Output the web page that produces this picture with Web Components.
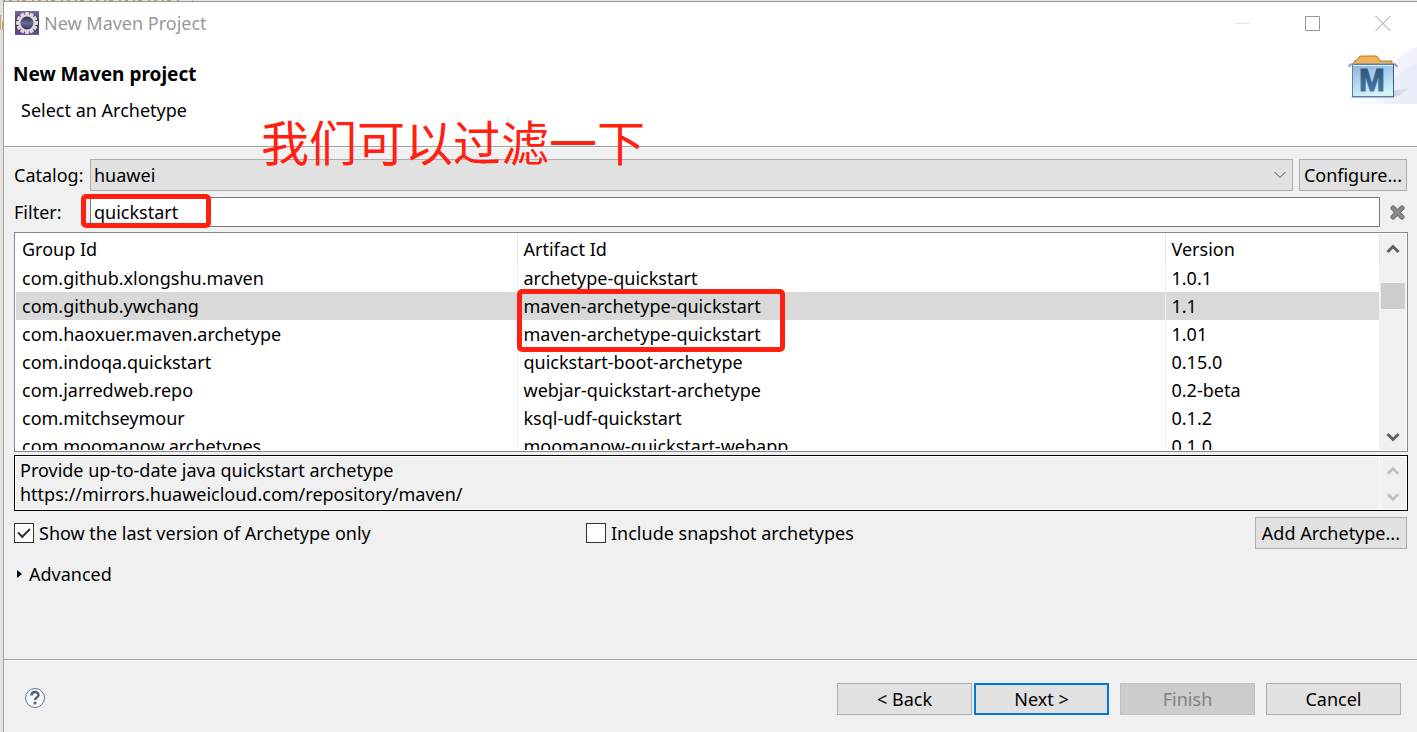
<!DOCTYPE html>
<html lang="zh">
<head>
<meta charset="utf-8">
<title>New Maven Project</title>
<style>
  html, body {
    height: 100%;
    margin: 0;
  }

  body {
    display: flex;
    flex-direction: column;
    position: relative;
    overflow: hidden;
    background: #e4e2df;
    color: #000;
    font: 18px/24px "Noto Sans", "Open Sans", "Noto Sans CJK SC", sans-serif;
  }

  wizard-dialog {
    flex: 1;
    margin: 1px 0 0 3px;
  }
</style>
</head>
<body>
<background-window></background-window>
<wizard-dialog>
  <window-titlebar slot="titlebar">New Maven Project</window-titlebar>
  <wizard-header slot="header" heading="New Maven project">
    Select an Archetype
    <red-note slot="note">我们可以过滤一下</red-note>
  </wizard-header>
  <archetype-filter></archetype-filter>
  <archetype-table></archetype-table>
  <archetype-description></archetype-description>
  <archetype-options></archetype-options>
  <wizard-footer slot="footer"></wizard-footer>
</wizard-dialog>

<script>
const BUTTON_CSS = `
  button {
    height: 32px;
    box-sizing: border-box;
    padding: 0 4px;
    border: 1px solid #adadad;
    border-radius: 0;
    background: #e1e1e1;
    color: #000;
    font: inherit;
    line-height: 24px;
    white-space: nowrap;
  }
`;

const SCROLLBAR_CSS = `
  .scrollbar {
    display: flex;
    flex-direction: column;
    flex: none;
    width: 26px;
    background: #f0f0f0;
    color: #606060;
  }

  .scrollbar svg {
    display: block;
    flex: none;
    width: 26px;
    height: 28px;
    fill: none;
    stroke: currentColor;
    stroke-width: 3;
  }
`;

const ARROW_UP = `<svg viewBox="0 0 26 28" aria-hidden="true"><path d="M7.5 18 13 12.500 18.500 18"/></svg>`;
const ARROW_DOWN = `<svg viewBox="0 0 26 28" aria-hidden="true"><path d="M7.5 12 13 17.500 18.500 12"/></svg>`;

// the edge of the project tree that shows from under the dialog
class BackgroundWindow extends HTMLElement {
  connectedCallback() {
    const shadow = this.attachShadow({ mode: "open" });
    shadow.innerHTML = `
      <style>
        :host {
          position: absolute;
          inset: 0;
        }

        svg {
          display: block;
        }
      </style>
      <svg width="200" height="40" aria-hidden="true">
        <path d="M3 .5h178" stroke="#b89a5a" stroke-dasharray="2 4 3 5 2 3 4 6"/>
        <path d="M192.500 0v2" stroke="#bbb"/>
        <path d="M.5 15v15M2.500 21v9" stroke="#c9a566"/>
      </svg>
    `;
  }
}

class WizardDialog extends HTMLElement {
  connectedCallback() {
    const shadow = this.attachShadow({ mode: "open" });
    shadow.innerHTML = `
      <style>
        :host {
          display: flex;
          flex-direction: column;
          position: relative;
          min-height: 0;
          border-top: 1px solid #999;
          border-left: 1px solid #a0a0a0;
          background: #f0f0f0;
        }

        main {
          flex: 1;
          display: flex;
          flex-direction: column;
          gap: 3px;
          padding: 12px 9px 0 10px;
        }
      </style>
      <slot name="titlebar"></slot>
      <slot name="header"></slot>
      <main><slot></slot></main>
      <slot name="footer"></slot>
    `;
  }
}

class WindowTitlebar extends HTMLElement {
  connectedCallback() {
    const shadow = this.attachShadow({ mode: "open" });
    let teeth = "";
    for (let i = 0; i < 12; i++) {
      teeth += `<rect x="10" y="1" width="4" height="5" rx="1" transform="rotate(${i * 30} 12 12)"/>`;
    }
    shadow.innerHTML = `
      <style>
        :host {
          display: flex;
          align-items: center;
          gap: 5px;
          height: 42px;
          padding-left: 11px;
          background: #fff;
          color: #999;
        }

        .title {
          flex: 1;
        }

        .controls {
          display: flex;
        }

        button {
          width: 70px;
          height: 42px;
          padding: 0 0 0 2px;
          border: 0;
          background: none;
          color: #999;
        }

        button:disabled {
          color: #e5e5e5;
        }

        svg {
          display: block;
          margin: auto 0;
        }

        button svg {
          margin: auto;
          fill: none;
          stroke: currentColor;
        }
      </style>
      <svg width="24" height="24" viewBox="0 0 24 24" aria-hidden="true">
        <defs>
          <linearGradient id="plate" x2="0" y2="1">
            <stop offset="0" stop-color="#7a6a9c"/>
            <stop offset="0.5" stop-color="#443066"/>
            <stop offset="1" stop-color="#6c5299"/>
          </linearGradient>
          <linearGradient id="core" x2="0" y2="1">
            <stop offset="0" stop-color="#23233f"/>
            <stop offset="0.5" stop-color="#696a9a"/>
            <stop offset="1" stop-color="#2c2553"/>
          </linearGradient>
        </defs>
        <rect width="24" height="24" fill="url(#plate)"/>
        <g fill="#dcdad6">${teeth}</g>
        <circle cx="12" cy="12" r="7.500" fill="url(#core)" stroke="#d9d8d2" stroke-width="2"/>
      </svg>
      <span class="title"><slot></slot></span>
      <div class="controls">
        <button disabled aria-label="Minimize"><svg width="16" height="16"><path d="M0 8.500h15"/></svg></button>
        <button aria-label="Maximize"><svg width="16" height="16"><path d="M.5 1.500h14v14H.5z"/></svg></button>
        <button aria-label="Close"><svg width="16" height="16"><path d="M.5 1l15 15M15.500 1l-15 15"/></svg></button>
      </div>
    `;
  }
}

class WizardHeader extends HTMLElement {
  connectedCallback() {
    const shadow = this.attachShadow({ mode: "open" });
    shadow.innerHTML = `
      <style>
        :host {
          display: flex;
          justify-content: space-between;
          position: relative;
          height: 102px;
          border-bottom: 1px solid #a0a0a0;
          box-shadow: 0 1px #fff;
          background: #fff;
        }

        .texts {
          padding: 18px 9px 0;
        }

        h1 {
          margin: 0 0 12px;
          font-size: 19px;
          line-height: 24px;
        }

        p {
          margin: 0;
          padding-left: 8px;
        }

        /* remark laid over the header and the form */
        ::slotted(red-note) {
          position: absolute;
          left: 257px;
          top: 64px;
          z-index: 1;
        }
      </style>
      <div class="texts">
        <h1>${this.getAttribute("heading")}</h1>
        <p><slot></slot></p>
      </div>
      <slot name="note"></slot>
      <svg width="90" height="60" viewBox="0 0 90 60" aria-hidden="true">
        <defs>
          <linearGradient id="sky" x1="0" x2="1">
            <stop offset="0" stop-color="#fff"/>
            <stop offset="1" stop-color="#eef1fb"/>
          </linearGradient>
          <linearGradient id="box" x1="0" y1="0" x2="0.300" y2="1">
            <stop offset="0" stop-color="#8fb2dc"/>
            <stop offset="0.600" stop-color="#b4d9ec"/>
            <stop offset="1" stop-color="#d3f3f3"/>
          </linearGradient>
          <linearGradient id="letter" x2="0" y2="1">
            <stop offset="0" stop-color="#2f4d70"/>
            <stop offset="1" stop-color="#4580b8"/>
          </linearGradient>
          <linearGradient id="shade">
            <stop offset="0" stop-color="#b9b4cf"/>
            <stop offset="1" stop-color="#ebeaf6"/>
          </linearGradient>
        </defs>
        <path d="M90 3C76 7 68 16 62 27 50 40 30 54 16 60H90z" fill="url(#sky)"/>
        <path d="M90 20C76 23 64 31 56 60H90z" fill="#e6eaf8" opacity=".5"/>
        <path d="M66 47 84 43Q76 51 67 53z" fill="url(#shade)" opacity=".6"/>
        <path d="M24 53.500h43" stroke="#b9b4c9"/>
        <path d="M27 20v-2q0-2 3-2 2-4 4-4H49q2 0 4 5H65v4H27z" fill="#f5b055" stroke="#b67a1c"/>
        <path d="M22 23q1-3 4-3H66q3 0 4 3" fill="none" stroke="#999ba5" stroke-width="2"/>
        <rect x="25.500" y="20.500" width="41" height="32" fill="url(#box)" stroke="#5381b0"/>
        <path d="M26 21.500H66" stroke="#e1f0fb"/>
        <path d="M66.500 20v33" stroke="#31618d"/>
        <text x="45" y="47" text-anchor="middle" font-family="Liberation Sans" font-weight="700" font-size="31" fill="url(#letter)" stroke="url(#letter)">M</text>
      </svg>
    `;
  }
}

class RedNote extends HTMLElement {
  connectedCallback() {
    const shadow = this.attachShadow({ mode: "open" });
    shadow.innerHTML = `
      <style>
        :host {
          display: block;
          color: #ff2010;
          font: 48px/64px "Noto Sans CJK SC", sans-serif;
          white-space: nowrap;
          pointer-events: none;
        }
      </style>
      <slot></slot>
    `;
  }
}

class ArchetypeFilter extends HTMLElement {
  connectedCallback() {
    const shadow = this.attachShadow({ mode: "open" });
    shadow.innerHTML = `
      <style>
        :host {
          display: flex;
          flex-direction: column;
          gap: 6px;
        }

        ${BUTTON_CSS}

        .row {
          display: flex;
          align-items: center;
        }

        .row > label {
          flex: none;
          width: 76px;
        }

        .combo, .field {
          flex: 1;
          position: relative;
        }

        select, input {
          display: block;
          width: 100%;
          box-sizing: border-box;
          border: 1px solid #adadad;
          border-radius: 0;
          padding: 0 3px;
          color: #000;
          font: inherit;
          appearance: none;
          outline: 0;
        }

        select {
          height: 32px;
          background: #e1e1e1;
        }

        input {
          height: 30px;
          border-color: #7a7a7a;
          background: #fff;
        }

        .combo svg {
          position: absolute;
          right: 7px;
          top: 11px;
          pointer-events: none;
        }

        .row > button:not(.clear) {
          margin: 0 1px 0 6px;
        }

        .clear {
          display: flex;
          align-items: center;
          justify-content: center;
          width: 28px;
          height: 30px;
          padding: 0 0 0 6px;
          border: 0;
          background: none;
        }

        .mark {
          position: absolute;
          left: -9px;
          top: -3px;
          width: 120px;
          height: 24px;
          border: 5px solid #ff2010;
          border-radius: 5px;
          pointer-events: none;
        }
      </style>
      <div class="row">
        <label for="catalog">Catalog:</label>
        <div class="combo">
          <select id="catalog"><option>huawei</option></select>
          <svg width="12" height="10" viewBox="0 0 12 10" fill="none" stroke="#505050" aria-hidden="true"><path d="M.5 2 6 7.500 11.500 2"/></svg>
        </div>
        <button>Configure...</button>
      </div>
      <div class="row">
        <label for="filter">Filter:</label>
        <div class="field">
          <input id="filter" type="text" value="quickstart" spellcheck="false">
          <div class="mark"></div>
        </div>
        <button class="clear" aria-label="Clear">
          <svg width="15" height="15" viewBox="0 0 15 15" fill="none" stroke-linecap="round" aria-hidden="true">
            <path d="M3 3l9 9M12 3l-9 9" stroke="#6d6d6d" stroke-width="5"/>
            <path d="M3 3l9 9M12 3l-9 9" stroke="#8c8c8c" stroke-width="3"/>
          </svg>
        </button>
      </div>
    `;
  }
}

const ARCHETYPES = [
  ["com.github.xlongshu.maven", "archetype-quickstart", "1.0.1"],
  ["com.github.ywchang", "maven-archetype-quickstart", "1.1"],
  ["com.haoxuer.maven.archetype", "maven-archetype-quickstart", "1.01"],
  ["com.indoqa.quickstart", "quickstart-boot-archetype", "0.15.0"],
  ["com.jarredweb.repo", "webjar-quickstart-archetype", "0.2-beta"],
  ["com.mitchseymour", "ksql-udf-quickstart", "0.1.2"],
  ["com.moomanow.archetypes", "moomanow-quickstart-webapp", "0.1.0"]
];
const SELECTED = 1;

class ArchetypeTable extends HTMLElement {
  connectedCallback() {
    const shadow = this.attachShadow({ mode: "open" });
    const rows = ARCHETYPES.map((cells, i) => `
      <tr class="${i === SELECTED ? "selected" : ""}">
        ${cells.map(text => `<td>${text}</td>`).join("")}
      </tr>`).join("");
    shadow.innerHTML = `
      <style>
        :host {
          display: flex;
          height: 216px;
          margin-top: 2px;
          padding: 1px;
          border: 1px solid #828790;
          background: #fff;
        }

        ${SCROLLBAR_CSS}

        .view {
          flex: 1;
          position: relative;
          overflow: hidden;
        }

        table {
          width: 100%;
          border-collapse: collapse;
          table-layout: fixed;
        }

        th, td {
          height: 28px;
          box-sizing: border-box;
          padding: 0 6px;
          border-right: 1px solid #edf3f8;
          font-weight: 400;
          text-align: left;
          white-space: nowrap;
        }

        th {
          height: 30px;
          border-color: #e5e5e5;
        }

        .selected {
          background: #d9d9d9;
        }

        .mark {
          position: absolute;
          left: 501px;
          top: 55px;
          width: 258px;
          height: 53px;
          border: 5px solid #ff2010;
          border-radius: 5px;
          pointer-events: none;
        }

        .thumb {
          height: 26px;
          margin: 21px 1px 0;
          background: #cdcdcd;
        }

        .scrollbar svg:last-child {
          margin-top: auto;
        }
      </style>
      <div class="view">
        <table>
          <colgroup><col style="width: 501px"><col style="width: 648px"><col></colgroup>
          <thead><tr><th>Group Id</th><th>Artifact Id</th><th>Version</th></tr></thead>
          <tbody>${rows}</tbody>
        </table>
        <div class="mark"></div>
      </div>
      <div class="scrollbar">${ARROW_UP}<div class="thumb"></div>${ARROW_DOWN}</div>
    `;
  }
}

class ArchetypeDescription extends HTMLElement {
  connectedCallback() {
    const shadow = this.attachShadow({ mode: "open" });
    shadow.innerHTML = `
      <style>
        :host {
          display: flex;
          padding: 1px;
          border: 1px solid #000;
          background: #f0f0f0;
          box-shadow: inset 0 0 0 1px #fff;
        }

        ${SCROLLBAR_CSS}

        p {
          flex: 1;
          height: 50px;
          margin: 0;
          padding: 1px 4px;
        }

        .scrollbar {
          justify-content: center;
          border-left: 1px solid #fff;
          color: #bfbfbf;
        }

        .scrollbar svg {
          height: 26px;
        }
      </style>
      <p>Provide up-to-date java quickstart archetype<br>https://mirrors.huaweicloud.com/repository/maven/</p>
      <div class="scrollbar">${ARROW_UP}${ARROW_DOWN}</div>
    `;
  }
}

class ArchetypeOptions extends HTMLElement {
  connectedCallback() {
    const shadow = this.attachShadow({ mode: "open" });
    shadow.innerHTML = `
      <style>
        :host {
          display: block;
          padding-top: 3px;
        }

        ${BUTTON_CSS}

        .row {
          display: grid;
          grid-template-columns: 572px 1fr auto;
          align-items: center;
          padding-right: 1px;
        }

        .row button {
          padding: 0 6px;
        }

        label {
          display: flex;
          align-items: center;
          gap: 5px;
        }

        input {
          flex: none;
          display: flex;
          appearance: none;
          width: 20px;
          height: 20px;
          margin: 0;
          border: 1px solid #333;
          background: #fff;
        }

        input:checked::before {
          content: "";
          width: 11px;
          height: 5px;
          margin: 4px 3px;
          border: solid #333;
          border-width: 0 0 2px 2px;
          transform: rotate(-45deg);
        }

        summary {
          display: flex;
          align-items: center;
          gap: 7px;
          margin: 13px 0 0 3px;
        }
      </style>
      <div class="row">
        <label><input type="checkbox" checked>Show the last version of Archetype only</label>
        <label><input type="checkbox">Include snapshot archetypes</label>
        <button>Add Archetype...</button>
      </div>
      <details>
        <summary><svg width="5" height="8" aria-hidden="true"><path d="M0 0l5 4-5 4z"/></svg>Advanced</summary>
      </details>
    `;
  }
}

class WizardFooter extends HTMLElement {
  connectedCallback() {
    const shadow = this.attachShadow({ mode: "open" });
    shadow.innerHTML = `
      <style>
        :host {
          display: flex;
          align-items: center;
          gap: 11px;
          padding: 23px 16px 17px 20px;
          border-top: 1px solid #a0a0a0;
          box-shadow: inset 0 1px #fff;
        }

        ${BUTTON_CSS}

        button {
          width: 135px;
        }

        .default {
          border: 2px solid #0078d7;
        }

        button:disabled {
          border-color: #bfbfbf;
          background: #ccc;
          color: #838383;
        }

        .help {
          width: 22px;
          height: 24px;
          margin-right: auto;
          padding: 0 0 2px;
          border: 0;
          background: none;
        }

        .help svg {
          display: block;
        }

        .pair {
          display: flex;
          gap: 2px;
        }
      </style>
      <button class="help" aria-label="Help">
        <svg width="22" height="22" viewBox="0 0 22 22">
          <circle cx="11" cy="11" r="9.500" fill="#f6f6f6" stroke="#647896"/>
          <path d="M7.500 8.500C7.500 4 14.500 4 14.500 8c0 2.500-3.500 2.500-3.500 5" fill="none" stroke="#4f6488" stroke-width="2.500"/>
          <circle cx="11" cy="16" r="1.500" fill="#4f6488"/>
        </svg>
      </button>
      <div class="pair">
        <button>&lt; Back</button>
        <button class="default">Next &gt;</button>
      </div>
      <button disabled>Finish</button>
      <button>Cancel</button>
    `;
  }
}

customElements.define("background-window", BackgroundWindow);
customElements.define("wizard-dialog", WizardDialog);
customElements.define("window-titlebar", WindowTitlebar);
customElements.define("wizard-header", WizardHeader);
customElements.define("red-note", RedNote);
customElements.define("archetype-filter", ArchetypeFilter);
customElements.define("archetype-table", ArchetypeTable);
customElements.define("archetype-description", ArchetypeDescription);
customElements.define("archetype-options", ArchetypeOptions);
customElements.define("wizard-footer", WizardFooter);
</script>
</body>
</html>
